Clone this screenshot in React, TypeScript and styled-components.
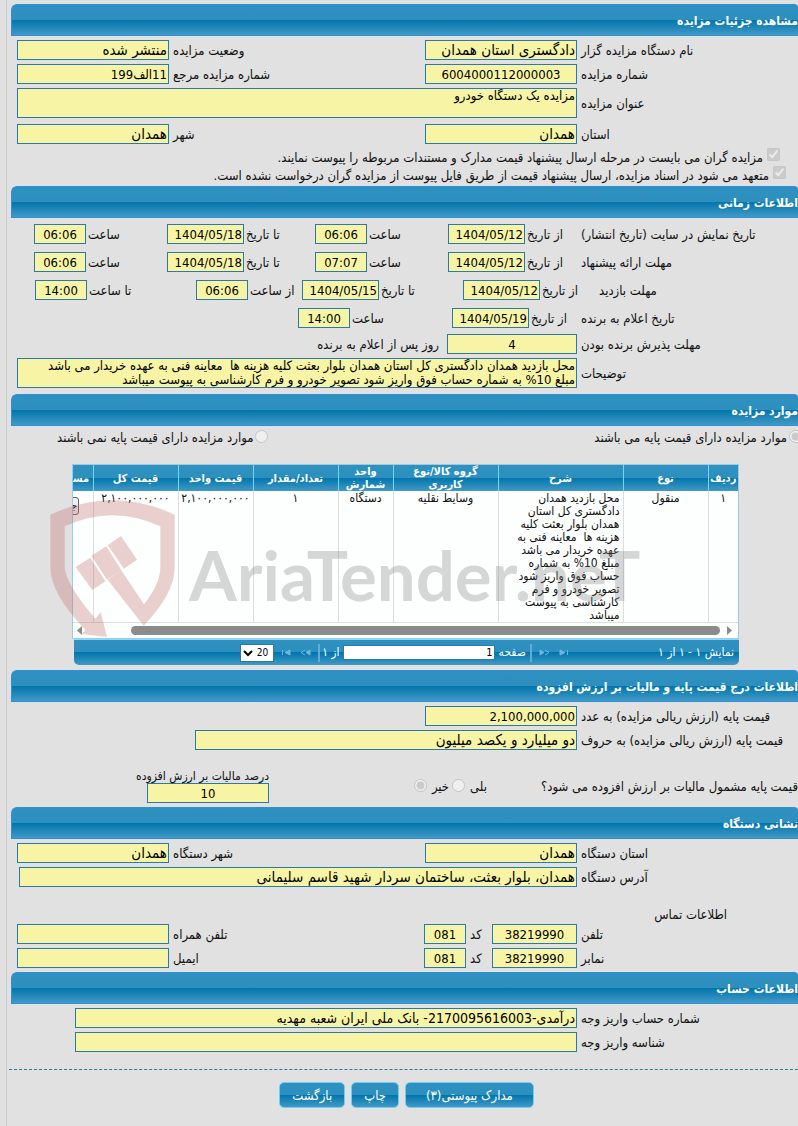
import React, { useId } from "react";
import styled, { createGlobalStyle, css } from "styled-components";

const GlobalStyle = createGlobalStyle`
  *, *::before, *::after { box-sizing: border-box; }
  body {
    margin: 0;
    background: #e1e1e1;
    color: #111;
    font: 13px/13px "DejaVu Sans Condensed", "DejaVu Sans", sans-serif;
    overflow-x: hidden;
  }
  input, textarea, select, button { font-family: inherit; margin: 0; }
`;

const glossy = css`
  background: linear-gradient(#2f91c0 0, #2d8fbe 50%, #0075ad 50%, #4299c4 100%);
`;

const Page = styled.main`
  min-height: 100vh;
  margin-left: 6px;
  padding: 4px 0 16px 4px;
  border-left: 1px solid #c8c8c8;
  overflow: hidden;
`;

const Title = styled.h2`
  ${glossy}
  height: 32px;
  margin: 0;
  border: 1px solid #2b90df;
  border-right: 0;
  border-radius: 6px 4px 0 0;
  color: #fff;
  font-size: 12px;
  line-height: 32px;
`;

const Body = styled.div<{ $bottom?: number }>`
  display: flex;
  flex-direction: column;
  gap: 4px;
  padding: 4px 0 ${(p) => p.$bottom ?? 4}px 6px;
`;

const Row = styled.div<{ $cols: string; $top?: number }>`
  display: grid;
  grid-template-columns: ${(p) => p.$cols};
  align-items: center;
  margin-top: ${(p) => p.$top ?? 0}px;
`;

const Label = styled.label<{ $gap?: number }>`
  padding-top: 1px;
  padding-left: ${(p) => p.$gap ?? 4}px;
  text-align: left;
  white-space: nowrap;
`;

const AfterNote = styled.span`
  padding: 1px 8px 0 0;
`;

const fieldLook = css`
  display: block;
  min-width: 0;
  padding: 0 1px;
  border: 1px solid #2a7aa8;
  border-radius: 0;
  outline: 0;
  background: #f7f5a5;
  color: #000;
`;

const Field = styled.input<{ $width?: number; $inset?: number; $center?: boolean; $size?: number }>`
  ${fieldLook}
  flex: none;
  width: ${(p) => (p.$width ? `${p.$width}px` : `calc(100% - ${p.$inset ?? 0}px)`)};
  height: 20px;
  font-size: ${(p) => p.$size ?? 13}px;
  text-align: ${(p) => (p.$center ? "center" : "right")};
`;

const Area = styled.textarea`
  ${fieldLook}
  width: 100%;
  height: 30px;
  font-size: 13px;
  line-height: 14px;
  resize: none;
  overflow: hidden;
  white-space: pre;
`;

const Pair = styled.div`
  display: flex;
  justify-content: flex-end;
  align-items: center;
`;

const Check = styled.label<{ $start: number }>`
  display: flex;
  align-items: center;
  gap: 4px;
  height: 16px;
  margin-right: ${(p) => p.$start}px;
  white-space: nowrap;
  input { width: 13px; height: 13px; margin-bottom: 6px; }
`;

const Checks = styled.div`
  display: flex;
  flex-direction: column;
  gap: 2px;
  padding-top: 1px;
`;

const Choices = styled.div`
  display: flex;
  justify-content: space-between;
  height: 22px;
  margin: 0 -4px 0 46px;
`;

const Choice = styled.label<{ $gap?: number }>`
  display: flex;
  align-items: center;
  gap: ${(p) => p.$gap ?? 2}px;
  white-space: nowrap;
  input { width: 13px; height: 13px; margin-bottom: 2px; }
`;

const GridArea = styled.section`
  position: relative;
  padding: 16px 59px 5px 61px;
`;

const Viewport = styled.div`
  overflow: hidden;
  border: 1px solid #9ccbe6;
  background: #fdfefe;
`;

const Table = styled.table`
  width: 100%;
  table-layout: fixed;
  border-collapse: collapse;
  font-size: 12px;
  th, td { padding: 0; overflow: hidden; border-left: 1px solid #ddd; }
  th:last-child, td:last-child { border-left: 0; }
  th {
    ${glossy}
    height: 26px;
    border-color: #77d5f7;
    color: #fff;
    font-size: 11px;
    line-height: 13px;
    white-space: pre;
  }
  td { padding-top: 1px; vertical-align: top; text-align: center; white-space: nowrap; }
  td.text { padding-right: 3px; text-align: right; white-space: pre; }
  td.cut, th.cut { text-align: left; }
`;

const DetailButton = styled.button`
  float: left;
  height: 18px;
  margin: 5px 0 0 -3px;
  padding: 0 1px 0 0;
  border: 1px solid #666;
  border-radius: 3px;
  background: #efefef;
  font-size: 11px;
  line-height: 14px;
`;

const ScrollTrack = styled.div`
  display: flex;
  align-items: center;
  height: 16px;
  padding: 0 6px 0 4px;
  border-top: 1px solid #ddd;
  color: #8b8b8b;
  svg { flex: none; width: 5px; height: 9px; }
`;

const Thumb = styled.div`
  flex: 1;
  height: 9px;
  margin: 0 7px 0 49px;
  border-radius: 5px;
  background: #8b8b8b;
`;

const Pager = styled.nav`
  ${glossy}
  display: flex;
  align-items: center;
  height: 26px;
  margin-left: 2px;
  padding-right: 5px;
  border-top: 1px solid #8fd6f5;
  border-radius: 0 0 5px 5px;
  color: #fff;
  font-size: 12px;
  white-space: nowrap;
  label { display: flex; align-items: center; gap: 4px; margin: 0 4px 0 3px; }
`;

const PageInput = styled.input`
  width: 152px;
  height: 15px;
  padding: 0 1px;
  border: 1px solid #2a7aa8;
  font-size: 11px;
`;

const PageSize = styled.select`
  width: 34px;
  height: 18px;
  margin-right: 6px;
  padding: 0 5px 0 0;
  border: 1px solid #2a7aa8;
  appearance: none;
  background: #fff url("data:image/svg+xml,%3Csvg xmlns='http://www.w3.org/2000/svg' viewBox='0 0 10 7'%3E%3Cpath d='M1 1l4 4 4-4' fill='none' stroke='%23000' stroke-width='2'/%3E%3C/svg%3E") 2px 5px / 10px 7px no-repeat;
  color: #000;
  font-size: 10px;
  direction: ltr;
  text-align: right;
`;

const Divider = styled.span<{ $start: number }>`
  width: 2px;
  height: 18px;
  margin-right: ${(p) => p.$start}px;
  background: #64abcf;
`;

const PageStep = styled.button<{ $start: number }>`
  width: 11px;
  height: 16px;
  margin-right: ${(p) => p.$start}px;
  padding: 0;
  border: 0;
  background: none;
  color: #6eb7dc;
  svg { display: block; width: 11px; height: 7px; }
`;

const Watermark = styled.div`
  position: absolute;
  top: 52px;
  left: 39px;
  display: flex;
  direction: ltr;
  pointer-events: none;
  svg { flex: none; width: 125px; height: 138px; }
  span {
    padding: 35px 0 0 14px;
    color: rgba(122, 122, 122, 0.3);
    font: bold 69px/80px Lato, "Liberation Sans", sans-serif;
  }
`;

const VatRow = styled.div`
  display: flex;
  align-items: center;
  height: 33px;
  margin-top: 16px;
  white-space: nowrap;
`;

const Answers = styled.div`
  display: flex;
  gap: 3px;
  margin-right: 54px;
`;

const Percent = styled.div`
  width: 135px;
  margin: 0 auto 0 117px;
  label { display: block; font-size: 12px; }
`;

const Contact = styled.h3`
  height: 29px;
  margin: 0 71px 0 0;
  padding-top: 17px;
  font-size: 13px;
  font-weight: normal;
  line-height: 13px;
`;

const Rule = styled.hr`
  margin: 13px 0 12px -2px;
  border: 0;
  border-top: 1px dashed #2a7aa8;
`;

const Actions = styled.div`
  display: flex;
  justify-content: center;
  gap: 6px;
  padding-left: 4px;
`;

const Action = styled.button`
  ${glossy}
  height: 26px;
  padding: 0 12px;
  border: 1px solid #6fcdf3;
  border-radius: 5px;
  color: #fff;
  font-size: 13px;
  &:first-child { padding: 0 20px; }
`;

type EntryProps = {
  label: string;
  value: string;
  inset?: number;
  center?: boolean;
  size?: number;
};

function Entry({ label, value, inset, center, size }: EntryProps) {
  const id = useId();
  return (
    <>
      <Label htmlFor={id}>{label}</Label>
      <Field
        id={id}
        readOnly
        value={value}
        $inset={inset}
        $center={center}
        $size={size ?? (/\d/.test(value) ? 13 : 15)}
      />
    </>
  );
}

function Note({ label, value }: { label: string; value: string }) {
  const id = useId();
  return (
    <Row $cols="221px 1fr">
      <Label htmlFor={id}>{label}</Label>
      <Area id={id} readOnly value={value} />
    </Row>
  );
}

function Moment({ label, value }: { label: string; value: string }) {
  const id = useId();
  const isTime = value.includes(":");
  return (
    <Pair>
      <Label htmlFor={id} $gap={2}>{label}</Label>
      <Field id={id} readOnly value={value} $width={isTime ? 52 : 77} $center={isTime} />
    </Pair>
  );
}

const schedule = [
  {
    cols: "221fr 129fr 133fr 148fr 133fr 17fr",
    label: "تاریخ نمایش در سایت (تاریخ انتشار)",
    items: [["از تاریخ", "1404/05/12"], ["ساعت", "06:06"], ["تا تاریخ", "1404/05/18"], ["ساعت", "06:06"]],
  },
  {
    cols: "221fr 129fr 133fr 148fr 133fr 17fr",
    label: "مهلت ارائه پیشنهاد",
    items: [["از تاریخ", "1404/05/12"], ["ساعت", "07:07"], ["تا تاریخ", "1404/05/18"], ["ساعت", "06:06"]],
  },
  {
    cols: "203fr 132fr 161fr 106fr 161fr 18fr",
    label: "مهلت بازدید",
    items: [["از تاریخ", "1404/05/12"], ["تا تاریخ", "1404/05/15"], ["از ساعت", "06:06"], ["تا ساعت", "14:00"]],
  },
  {
    cols: "221fr 125fr 154fr 281fr",
    label: "تاریخ اعلام به برنده",
    items: [["از تاریخ", "1404/05/19"], ["ساعت", "14:00"]],
  },
];

const StepIcon = ({ last, left }: { last?: boolean; left?: boolean }) => (
  <svg viewBox="0 0 11 7" fill="none" stroke="currentColor">
    <g transform={left ? "matrix(-1 0 0 1 11 0)" : undefined}>
      {last ? (
        <>
          <path d="M1 1v5l5-2.500z" fill="currentColor" />
          <path d="M8.500 1v5" />
        </>
      ) : (
        <>
          <path d="M1 1v5l4-2.500z" fill="currentColor" />
          <path d="M6 1l4 2.500-4 2.500" />
        </>
      )}
    </g>
  </svg>
);

const columns: [string, number | undefined][] = [
  ["ردیف", 30],
  ["نوع", 85],
  ["شرح", 125],
  ["گروه کالا/نوع\nکاربری", 105],
  ["واحد\nشمارش", 55],
  ["تعداد/مقدار", 85],
  ["قیمت واحد", 75],
  ["قیمت کل", 85],
  ["مس\u200d", undefined],
];

const description = [
  "محل بازدید همدان",
  "دادگستری کل استان",
  "همدان بلوار بعثت کلیه",
  "هزینه ها  معاینه فنی به",
  "عهده خریدار می باشد",
  "مبلغ 10% به شماره",
  "حساب فوق واریز شود",
  "تصویر خودرو و فرم",
  "کارشناسی به پیوست",
  "میباشد",
].join("\n");

function ItemsGrid() {
  return (
    <GridArea>
      <Viewport>
        <Table>
          <colgroup>
            {columns.map(([name, width]) => (
              <col key={name} width={width} />
            ))}
          </colgroup>
          <thead>
            <tr>
              {columns.map(([name, width]) => (
                <th key={name} scope="col" className={width ? undefined : "cut"}>{name}</th>
              ))}
            </tr>
          </thead>
          <tbody>
            <tr>
              <td>۱</td>
              <td>منقول</td>
              <td className="text">{description}</td>
              <td>وسایط نقلیه</td>
              <td>دستگاه</td>
              <td>۱</td>
              <td>۲,۱۰۰,۰۰۰,۰۰۰</td>
              <td>۲,۱۰۰,۰۰۰,۰۰۰</td>
              <td className="cut"><DetailButton type="button">{"ج\u200d"}</DetailButton></td>
            </tr>
          </tbody>
        </Table>
        <ScrollTrack>
          <svg viewBox="0 0 5 9"><path d="M0 0l5 4.500-5 4.500z" fill="currentColor" /></svg>
          <Thumb />
          <svg viewBox="0 0 5 9"><path d="M5 0L0 4.500 5 9z" fill="currentColor" /></svg>
        </ScrollTrack>
      </Viewport>
      <Pager>
        <span>نمایش ۱ - ۱ از ۱</span>
        <PageStep type="button" aria-label="اولین" $start={88}><StepIcon last /></PageStep>
        <PageStep type="button" aria-label="قبلی" $start={9}><StepIcon /></PageStep>
        <Divider $start={7} />
        <label>
          صفحه
          <PageInput defaultValue="1" />
        </label>
        <span>از ۱</span>
        <Divider $start={2} />
        <PageStep type="button" aria-label="بعدی" $start={7}><StepIcon left /></PageStep>
        <PageStep type="button" aria-label="آخرین" $start={9}><StepIcon last left /></PageStep>
        <PageSize aria-label="تعداد در صفحه" defaultValue="20">
          <option>20</option>
        </PageSize>
      </Pager>
      <Watermark aria-hidden="true">
        <svg viewBox="149 149 375 414" fill="rgba(192,98,100,0.3)">
          <path d="M523 193V350Q523 430 430 526L322 388 363 360 431 462Q480 400 480 350V228Q337 162 193 228V350Q195 400 285 505L301 486 320 560 245 551 255 538Q150 430 150 350V193Q337 107 523 193Z" />
          <path d="M226 350l44-28 45 71-39 26zM273 316l45-28 45 72-43 28zM322 285l40-28 48 71-39 27z" />
        </svg>
        <span>AriaTender.neT</span>
      </Watermark>
    </GridArea>
  );
}

const two = "221px 152px 1fr 152px";
const phone = "221px 85px 26px 42px 1fr 152px";

export default function App() {
  return (
    <Page dir="rtl" lang="fa">
      <GlobalStyle />

      <Title>مشاهده جزئیات مزایده</Title>
      <Body $bottom={3}>
        <Row $cols={two}>
          <Entry label="نام دستگاه مزایده گزار" value="دادگستری استان همدان" />
          <Entry label="وضعیت مزایده" value="منتشر شده" />
        </Row>
        <Row $cols={two}>
          <Entry label="شماره مزایده" value="6004000112000003" center />
          <Entry label="شماره مزایده مرجع" value="11الف199" />
        </Row>
        <Note label="عنوان مزایده" value="مزایده یک دستگاه خودرو" />
        <Row $cols={two} $top={2}>
          <Entry label="استان" value="همدان" />
          <Entry label="شهر" value="همدان" />
        </Row>
        <Checks>
          <Check $start={18}>
            <input type="checkbox" checked disabled readOnly />
            مزایده گران می بایست در مرحله ارسال پیشنهاد قیمت مدارک و مستندات مربوطه را پیوست نمایند.
          </Check>
          <Check $start={12}>
            <input type="checkbox" checked disabled readOnly />
            متعهد می شود در اسناد مزایده، ارسال پیشنهاد قیمت از طریق فایل پیوست از مزایده گران درخواست نشده است.
          </Check>
        </Checks>
      </Body>

      <Title>اطلاعات زمانی</Title>
      <Body $bottom={6}>
        {schedule.map((row, i) => (
          <Row key={row.label} $cols={row.cols} $top={i ? 4 : 2}>
            <Label as="span">{row.label}</Label>
            {row.items.map(([label, value], n) => (
              <Moment key={n} label={label} value={value} />
            ))}
          </Row>
        ))}
        <Row $cols="221px 130px 1fr" $top={2}>
          <Entry label="مهلت پذیرش برنده بودن" value="4" center />
          <AfterNote>روز پس از اعلام به برنده</AfterNote>
        </Row>
        <Note
          label="توضیحات"
          value={
            "محل بازدید همدان دادگستری کل استان همدان بلوار بعثت کلیه هزینه ها  معاینه فنی به عهده خریدار می باشد\nمبلغ 10% به شماره حساب فوق واریز شود تصویر خودرو و فرم کارشناسی به پیوست میباشد"
          }
        />
      </Body>

      <Title>موارد مزایده</Title>
      <Choices>
        <Choice>
          <input type="radio" name="base" checked disabled readOnly />
          موارد مزایده دارای قیمت پایه می باشند
        </Choice>
        <Choice>
          <input type="radio" name="base" disabled />
          موارد مزایده دارای قیمت پایه نمی باشند
        </Choice>
      </Choices>
      <ItemsGrid />

      <Title>اطلاعات درج قیمت پایه و مالیات بر ارزش افزوده</Title>
      <Body>
        <Row $cols={two}>
          <Entry label="قیمت پایه (ارزش ریالی مزایده) به عدد" value="2,100,000,000" />
        </Row>
        <Row $cols="221px 1fr">
          <Entry label="قیمت پایه (ارزش ریالی مزایده) به حروف" value="دو میلیارد و یکصد میلیون" inset={178} />
        </Row>
        <VatRow>
          <span>قیمت پایه مشمول مالیات بر ارزش افزوده می شود؟</span>
          <Answers>
            <Choice $gap={5}>بلی<input type="radio" name="vat" disabled /></Choice>
            <Choice $gap={5}>خیر<input type="radio" name="vat" checked disabled readOnly /></Choice>
          </Answers>
          <Percent>
            <label htmlFor="vat-percent">درصد مالیات بر ارزش افزوده</label>
            <Field id="vat-percent" readOnly value="10" $width={122} $center />
          </Percent>
        </VatRow>
      </Body>

      <Title>نشانی دستگاه</Title>
      <Body>
        <Row $cols={two}>
          <Entry label="استان دستگاه" value="همدان" />
          <Entry label="شهر دستگاه" value="همدان" />
        </Row>
        <Row $cols="221px 1fr">
          <Entry label="آدرس دستگاه" value="همدان، بلوار بعثت، ساختمان سردار شهید قاسم سلیمانی" inset={2} />
        </Row>
        <Contact>اطلاعات تماس</Contact>
        <Row $cols={phone}>
          <Entry label="تلفن" value="38219990" center />
          <Entry label="کد" value="081" center />
          <Entry label="تلفن همراه" value="" />
        </Row>
        <Row $cols={phone}>
          <Entry label="نمابر" value="38219990" center />
          <Entry label="کد" value="081" center />
          <Entry label="ایمیل" value="" />
        </Row>
      </Body>

      <Title>اطلاعات حساب</Title>
      <Body>
        <Row $cols="221px 1fr">
          <Entry label="شماره حساب واریز وجه" value="درآمدی-2170095616003- بانک ملی ایران شعبه مهدیه" inset={58} size={14} />
        </Row>
        <Row $cols="221px 1fr">
          <Entry label="شناسه واریز وجه" value="" inset={58} />
        </Row>
      </Body>

      <Rule />
      <Actions>
        <Action type="button">مدارک پیوستی(۳)</Action>
        <Action type="button">چاپ</Action>
        <Action type="button">بازگشت</Action>
      </Actions>
    </Page>
  );
}
